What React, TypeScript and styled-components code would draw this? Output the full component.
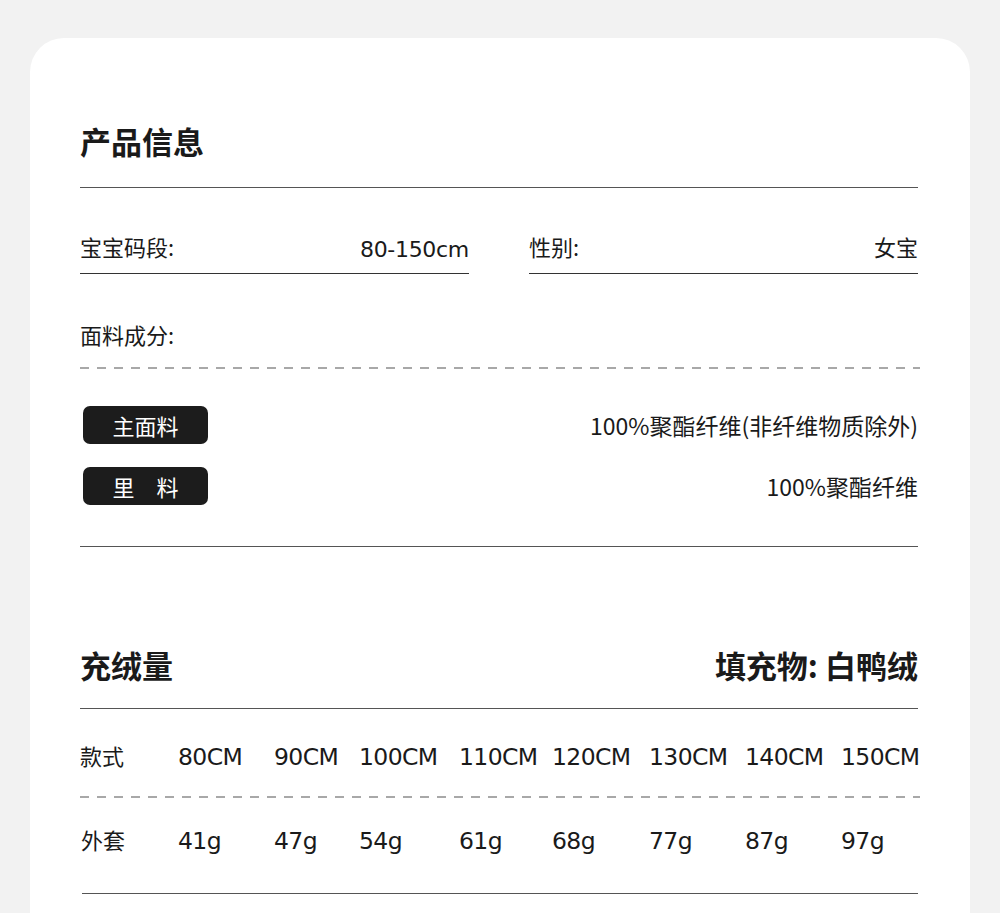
import React from "react";
import styled, { createGlobalStyle } from "styled-components";

const Global = createGlobalStyle`
  html, body { margin: 0; padding: 0; background: #f2f2f2; }
  body { overflow: hidden; font-family: "DejaVu Sans", "Noto Sans CJK SC", sans-serif; color: #1a1a1a; }
`;

const Page = styled.div`
  padding: 38px 30px 0 30px;
`;

const Card = styled.div`
  display: flow-root;
  background: #ffffff;
  border-radius: 34px 34px 0 0;
  padding: 0 52px 60px 50px;
  min-height: 1000px;
`;

const cjk = `"Noto Sans CJK SC", sans-serif`;
const latin = `"DejaVu Sans", "Noto Sans CJK SC", sans-serif`;

const SectionHead = styled.div<{ $top: number; $h: number }>`
  margin-top: ${(p) => p.$top}px;
  height: ${(p) => p.$h}px;
  display: flex;
  align-items: center;
  justify-content: space-between;
  border-bottom: 1.5px solid #555;
`;

const HeadTitle = styled.h2`
  margin: 0 0 4px 0;
  font-family: ${cjk};
  font-weight: 700;
  font-size: 31px;
  line-height: 1;
`;

const Fields = styled.div`
  margin-top: 35px;
  display: grid;
  grid-template-columns: 1fr 1fr;
  column-gap: 60px;
`;

const Field = styled.div`
  height: 50px;
  display: flex;
  align-items: center;
  justify-content: space-between;
  border-bottom: 1.5px solid #333;
`;

const Label = styled.span`
  font-family: ${cjk};
  font-size: 22px;
  line-height: 1;
  margin-bottom: 4px;
`;

const Value = styled.span<{ $latin?: boolean }>`
  font-family: ${(p) => (p.$latin ? latin : cjk)};
  font-size: 22px;
  letter-spacing: ${(p) => (p.$latin ? "-0.3px" : "0")};
  line-height: 1;
  margin-top: ${(p) => (p.$latin ? "3px" : "0")};
  margin-bottom: ${(p) => (p.$latin ? "0" : "4px")};
`;

const Dashed = styled.div`
  height: 2px;
  margin-right: -2px;
  background-image: linear-gradient(to right, #a8a8a8 0 9px, transparent 9px 17px);
  background-size: 17px 2px;
  background-repeat: repeat-x;
`;

const LabelRow = styled.div`
  margin-top: 31px;
  height: 62px;
  display: flex;
  align-items: center;
`;

const Materials = styled.div`
  padding-top: 37px;
  padding-bottom: 41px;
  display: flex;
  flex-direction: column;
  gap: 23px;
  border-bottom: 1.5px solid #555;
`;

const MaterialRow = styled.div`
  display: flex;
  align-items: center;
  justify-content: space-between;
  height: 38px;
`;

const Badge = styled.span`
  margin-left: 3px;
  width: 125px;
  height: 38px;
  border-radius: 7px;
  background: #1c1c1c;
  color: #fff;
  display: flex;
  align-items: center;
  justify-content: center;
  font-family: ${cjk};
  font-size: 22px;
  line-height: 1;
`;

const Composition = styled.span`
  font-family: "Noto Sans CJK SC", sans-serif;
  font-size: 23px;
  line-height: 1;
`;

const Table = styled.div`
  display: flex;
  flex-direction: column;
`;

const TRow = styled.div<{ $h: number; $pt: number; $pb: number }>`
  display: grid;
  grid-template-columns: 98px 96px 85px 100px 93px 97px 96px 96px auto;
  align-items: center;
  height: ${(p) => p.$h}px;
  padding-top: ${(p) => p.$pt}px;
  padding-bottom: ${(p) => p.$pb}px;
  box-sizing: border-box;
`;

const Rule = styled.div`
  height: 0;
  margin-left: 2px;
  border-bottom: 1.5px solid #555;
`;

const RowLabel = styled.span<{ $indent?: number }>`
  font-family: ${cjk};
  font-size: 22px;
  line-height: 1;
  margin-bottom: 7px;
  padding-left: ${(p) => p.$indent ?? 0}px;
`;

const Cell = styled.span`
  font-family: ${latin};
  font-size: 23.5px;
  letter-spacing: -0.6px;
  line-height: 1;
  white-space: nowrap;
`;

const sizes = ["80CM", "90CM", "100CM", "110CM", "120CM", "130CM", "140CM", "150CM"];
const weights = ["41g", "47g", "54g", "61g", "68g", "77g", "87g", "97g"];

export default function App() {
  return (
    <>
      <Global />
      <Page>
        <Card>
          <SectionHead $top={59} $h={90}>
            <HeadTitle>产品信息</HeadTitle>
          </SectionHead>

          <Fields>
            <Field>
              <Label>宝宝码段:</Label>
              <Value $latin>80-150cm</Value>
            </Field>
            <Field>
              <Label>性别:</Label>
              <Value>女宝</Value>
            </Field>
          </Fields>

          <LabelRow>
            <Label>面料成分:</Label>
          </LabelRow>
          <Dashed />

          <Materials>
            <MaterialRow>
              <Badge>主面料</Badge>
              <Composition>100%聚酯纤维(非纤维物质除外)</Composition>
            </MaterialRow>
            <MaterialRow>
              <Badge>里　料</Badge>
              <Composition>100%聚酯纤维</Composition>
            </MaterialRow>
          </Materials>

          <SectionHead $top={77} $h={84}>
            <HeadTitle>充绒量</HeadTitle>
            <HeadTitle>填充物: 白鸭绒</HeadTitle>
          </SectionHead>

          <Table>
            <TRow $h={87} $pt={11} $pb={0}>
              <RowLabel>款式</RowLabel>
              {sizes.map((s) => (
                <Cell key={s}>{s}</Cell>
              ))}
            </TRow>
            <Dashed />
            <TRow $h={95} $pt={0} $pb={7}>
              <RowLabel $indent={1}>外套</RowLabel>
              {weights.map((w) => (
                <Cell key={w}>{w}</Cell>
              ))}
            </TRow>
            <Rule />
          </Table>
        </Card>
      </Page>
    </>
  );
}
